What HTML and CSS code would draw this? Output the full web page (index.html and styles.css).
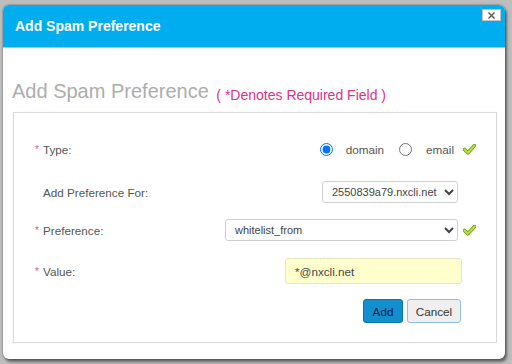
FILE: index.html
```html
<!DOCTYPE html>
<html lang="en">
<head>
<meta charset="utf-8">
<title>Add Spam Preference</title>
<link rel="stylesheet" href="styles.css">
</head>
<body>
<div class="dialog">
  <div class="dlg-head">
    <h1 class="title">Add Spam Preference</h1>
    <button class="close" type="button" aria-label="Close">
      <svg width="7" height="7" viewBox="0 0 7 7"><path d="M0.5 0.5L6.5 6.5M6.5 0.5L0.5 6.5" stroke="#555" stroke-width="1.4"/></svg>
    </button>
  </div>
  <div class="content">
    <h2 class="heading">Add Spam Preference <span class="note">( *Denotes Required Field )</span></h2>
    <form class="box">
      <div class="row row-type">
        <span class="label"><span class="req">*</span>Type:</span>
        <label class="opt"><input type="radio" name="type" checked><span>domain</span></label>
        <label class="opt"><input type="radio" name="type"><span>email</span></label>
        <svg class="check" width="13" height="11" viewBox="0 0 13 11"><path d="M1.5 5.5L4.8 8.8L11.6 1.6" fill="none" stroke="#6f9d16" stroke-width="3.6" stroke-linecap="round" stroke-linejoin="round"/><path d="M1.5 5.5L4.8 8.8L11.6 1.6" fill="none" stroke="#b6e23a" stroke-width="2" stroke-linecap="round" stroke-linejoin="round"/></svg>
      </div>
      <div class="row row-for">
        <span class="label"><span class="req"></span>Add Preference For:</span>
        <select class="sel sel-for"><option>2550839a79.nxcli.net</option></select>
        <span class="check-space"></span>
      </div>
      <div class="row row-pref">
        <span class="label"><span class="req">*</span>Preference:</span>
        <select class="sel sel-pref"><option>whitelist_from</option></select>
        <svg class="check" width="13" height="11" viewBox="0 0 13 11"><path d="M1.5 5.5L4.8 8.8L11.6 1.6" fill="none" stroke="#6f9d16" stroke-width="3.6" stroke-linecap="round" stroke-linejoin="round"/><path d="M1.5 5.5L4.8 8.8L11.6 1.6" fill="none" stroke="#b6e23a" stroke-width="2" stroke-linecap="round" stroke-linejoin="round"/></svg>
      </div>
      <div class="row row-value">
        <span class="label"><span class="req">*</span>Value:</span>
        <input class="value" type="text" value="*@nxcli.net">
      </div>
      <div class="row row-btns">
        <button class="btn btn-add" type="button">Add</button>
        <button class="btn btn-cancel" type="button">Cancel</button>
      </div>
    </form>
  </div>
</div>
</body>
</html>
```
FILE: styles.css
```css
html, body {
  margin: 0;
  width: 512px;
  height: 364px;
  overflow: hidden;
}
body {
  background: #bdbdbd;
  padding: 5px 0 0 3px;
  box-sizing: border-box;
  font-family: "Liberation Sans", Arial, sans-serif;
}
.dialog {
  width: 502px;
  height: 354px;
  background: #fff;
  border-radius: 6px;
  overflow: hidden;
  box-shadow: 0 0 2px rgba(0,0,0,.55), 2px 3px 3px rgba(0,0,0,.45);
}
.dlg-head {
  position: relative;
  height: 42px;
  background: #00aeef;
  border-bottom: 1px solid #86d3f3;
}
.title {
  margin: 0;
  padding-left: 12px;
  line-height: 42px;
  font-size: 14px;
  font-weight: bold;
  color: #fff;
}
.close {
  position: absolute;
  top: 4px;
  right: 4px;
  width: 19px;
  height: 12px;
  padding: 0;
  margin: 0;
  background: #fff;
  border: 1px solid #c4c4c4;
  box-sizing: border-box;
  display: flex;
  align-items: center;
  justify-content: center;
}
.content {
  padding: 0 8px 0 9px;
}
.heading {
  margin: 31px 0 9px;
  height: 24px;
  font-size: 20px;
  line-height: 24px;
  font-weight: normal;
  color: #adadad;
  white-space: nowrap;
}
.note {
  font-size: 14px;
  line-height: 14px;
  color: #d9338a;
  margin-left: 2px;
  vertical-align: -2px;
}
.box {
  margin: 0 0 0 1px;
  border: 1px solid #d9d9d9;
  box-shadow: 0 0 1px rgba(0,0,0,.08);
  padding: 25px 20px 19px 21px;
  display: flex;
  flex-direction: column;
}
.row {
  display: flex;
  align-items: center;
  justify-content: flex-end;
  font-size: 11.7px;
  color: #555;
}
.label {
  flex: 1;
  white-space: nowrap;
}
.req {
  display: inline-block;
  width: 8px;
  color: #e0559a;
  font-size: 10px;
  vertical-align: 1px;
}
.row-type { height: 22px; }
.row-for { height: 22px; margin-top: 21px; }
.row-pref { height: 22px; margin-top: 16px; }
.row-value { height: 26px; margin-top: 17px; }
.row-btns { height: 24px; margin-top: 15px; padding-right: 15px; }

.opt {
  display: flex;
  align-items: center;
}
.opt input {
  width: 13px;
  height: 13px;
  margin: 0 13px 0 0;
}
.opt + .opt { margin-left: 15px; }
.opt + .opt input { margin-right: 14px; }
.row-type .check { margin-left: 9px; }
.check {
  display: block;
  flex: none;
}
.check-space {
  width: 18px;
  flex: none;
}
.row-pref .check { margin-left: 5px; }

.sel {
  height: 22px;
  box-sizing: border-box;
  border: 1px solid #cfcfcf;
  border-radius: 3px;
  background: #fff;
  font-family: "Liberation Sans", Arial, sans-serif;
  font-size: 11px;
  color: #444;
  padding: 0 2px 0 5px;
  margin: 0;
}
.sel-for { width: 136px; }
.sel-pref { width: 233px; }

.value {
  width: 177px;
  height: 26px;
  box-sizing: border-box;
  margin: 0 14px 0 0;
  border: 1px solid #e6e6c4;
  border-radius: 3px;
  background: #ffffcd;
  font-family: "Liberation Sans", Arial, sans-serif;
  font-size: 11.7px;
  color: #444;
  padding: 0 9px;
}

.btn {
  height: 24px;
  box-sizing: border-box;
  border-radius: 3px;
  font-family: "Liberation Sans", Arial, sans-serif;
  font-size: 11.7px;
  padding: 0;
  margin: 0;
}
.btn-add {
  width: 40px;
  background: #118fce;
  border: 1px solid #0b74ab;
  color: #10233a;
}
.btn-cancel {
  width: 54px;
  margin-left: 4px;
  background: #efefef;
  border: 1px solid #8fbfe6;
  color: #333;
}
```
